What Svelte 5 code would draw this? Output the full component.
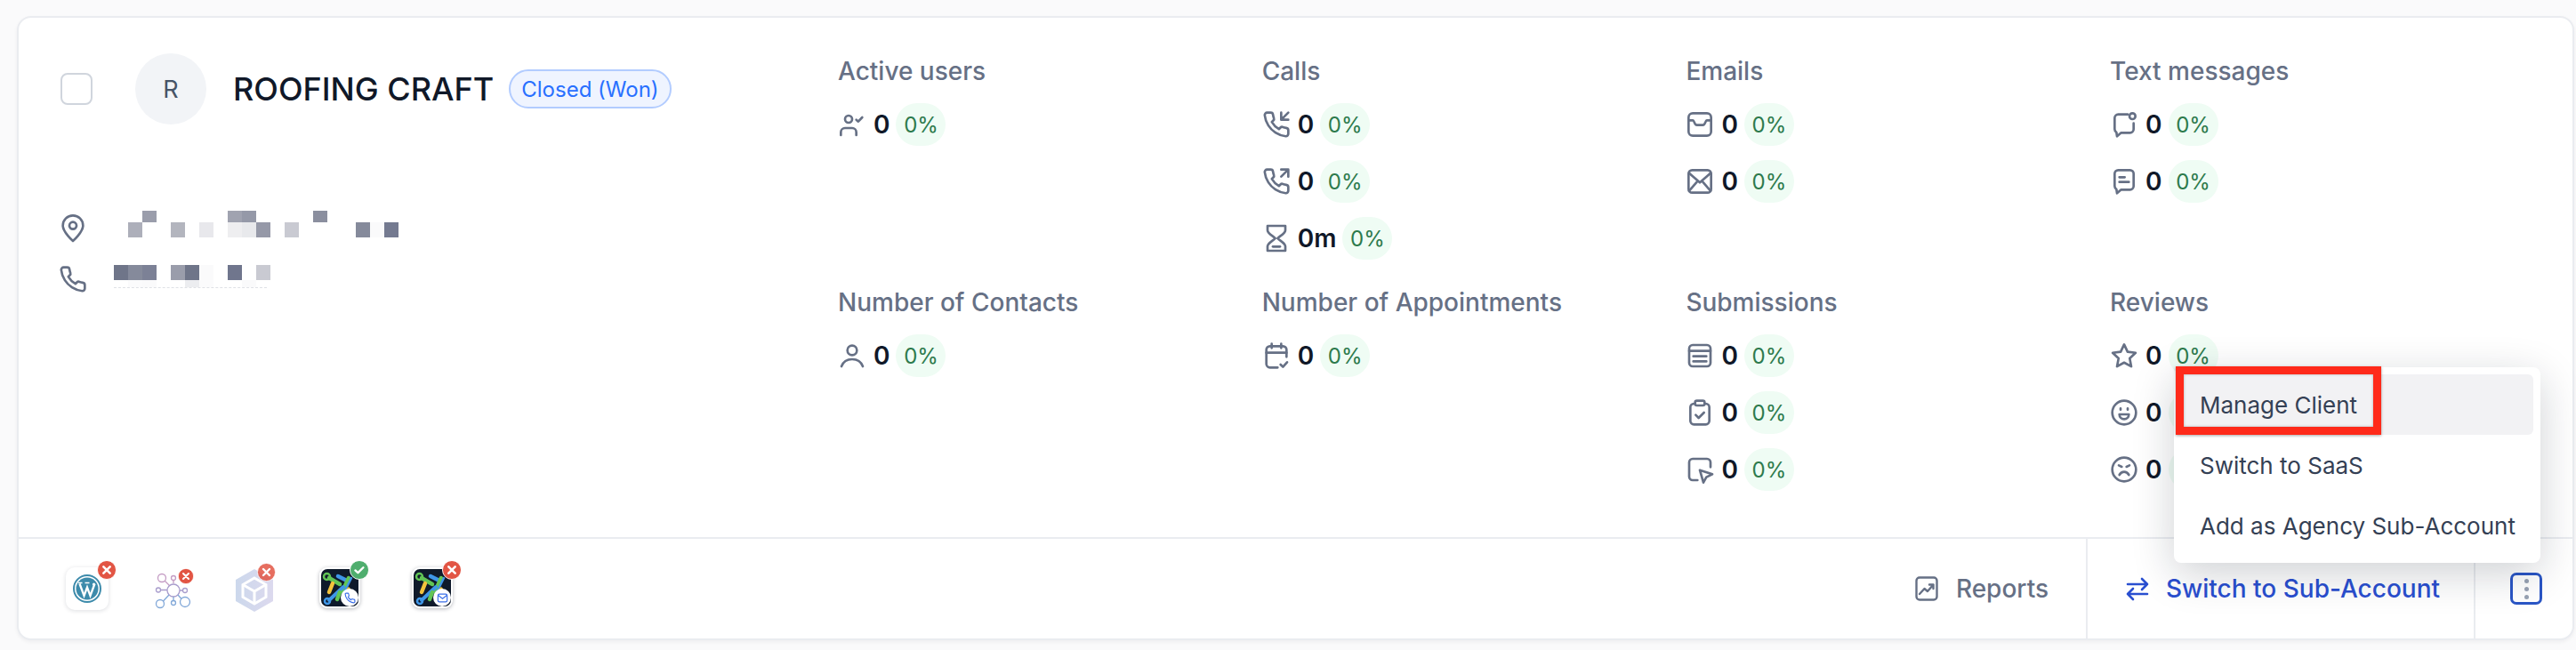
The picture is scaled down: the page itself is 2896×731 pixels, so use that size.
<script>
  const ic = {
    userCheck: `<circle cx="9" cy="7.500" r="3"/><path d="M2.500 21v-2.500A3.500 3.500 0 0 1 6 15h6a3.500 3.500 0 0 1 3.500 3.500V21"/><path d="M15.500 8l1.700 1.500 3.300-3.500"/>`,
    phoneIn: `<path d="M22 2l-6 6M16 2v6h6"/><path d="M22 16.920v3a2 2 0 0 1-2.180 2 19.790 19.790 0 0 1-8.630-3.070 19.500 19.500 0 0 1-6-6 19.790 19.790 0 0 1-3.070-8.670A2 2 0 0 1 4.110 2h3a2 2 0 0 1 2 1.720 12.840 12.840 0 0 0 .7 2.810 2 2 0 0 1-.45 2.110L8.090 9.910a16 16 0 0 0 6 6l1.270-1.270a2 2 0 0 1 2.110-.45 12.840 12.840 0 0 0 2.810.7A2 2 0 0 1 22 16.920z"/>`,
    phoneOut: `<path d="M16 8l6-6M16 2h6v6"/><path d="M22 16.920v3a2 2 0 0 1-2.180 2 19.790 19.790 0 0 1-8.630-3.070 19.500 19.500 0 0 1-6-6 19.790 19.790 0 0 1-3.070-8.670A2 2 0 0 1 4.110 2h3a2 2 0 0 1 2 1.720 12.840 12.840 0 0 0 .7 2.810 2 2 0 0 1-.45 2.110L8.090 9.910a16 16 0 0 0 6 6l1.270-1.270a2 2 0 0 1 2.110-.45 12.840 12.840 0 0 0 2.810.7A2 2 0 0 1 22 16.920z"/>`,
    hourglass: `<path d="M4.500 1.500h15v3.700c0 2.800-5 5-6.500 6.800 1.500 1.800 6.500 4 6.500 6.800v3.700h-15v-3.700c0-2.800 5-5 6.500-6.800-1.500-1.800-6.500-4-6.500-6.800z"/><path d="M9 19h6"/>`,
    inbox: `<rect x="2.500" y="2.500" width="19" height="19" rx="3.500"/><path d="M2.500 8.500h3.700c1.200 0 1 4 3.300 4h5c2.300 0 2.100-4 3.300-4h3.700"/>`,
    mail: `<rect x="2.500" y="2.500" width="19" height="19" rx="3"/><path d="M3 5l9 8 9-8M3 20l6.500-7.500M21 20l-6.500-7.500"/>`,
    msgDot: `<path d="M15 3.500H7a3 3 0 0 0-3 3V16a3 3 0 0 0 1.500 2.600L6 22l3.500-3H17a3 3 0 0 0 3-3v-5"/><circle cx="19" cy="5" r="2.500"/>`,
    msgText: `<path d="M7 2.500h10a3 3 0 0 1 3 3V16a3 3 0 0 1-3 3H9.500L6 22l-.5-3.400A3 3 0 0 1 4 16V5.500a3 3 0 0 1 3-3z"/><path d="M8 8.500h4.500M8 12.500h8"/>`,
    user: `<circle cx="12" cy="7.500" r="4"/><path d="M3 21c1.500-4 5-6 9-6s7.500 2 9 6"/>`,
    calCheck: `<path d="M20.500 13V7a3 3 0 0 0-3-3h-11a3 3 0 0 0-3 3v12a3 3 0 0 0 3 3H13"/><path d="M3.500 9.500h17M8 2v3.500M16 2v3.500"/><path d="M15.500 19.500l2 2 3.500-4"/>`,
    form: `<rect x="3" y="3" width="18" height="18" rx="3"/><path d="M3 8h18M6.500 12.500h11M6.500 16.800h11"/>`,
    clip: `<rect x="4" y="4.500" width="16" height="17.500" rx="3"/><rect x="8" y="2" width="8" height="4" rx="1.500" fill="#fff"/><path d="M8.500 14l2.500 2.500 4.500-4.500"/>`,
    cursor: `<path d="M21 10V6a3 3 0 0 0-3-3H6a3 3 0 0 0-3 3v12a3 3 0 0 0 3 3h4"/><path d="M12 12.500l10.500 3.500-5 2.500-2.500 4.500z"/>`,
    star: `<path d="M12 2.500l2.900 6.200 6.800.9-5 4.700 1.300 6.800-6-3.300-6 3.300 1.300-6.800-5-4.700 6.800-.9z"/>`,
    smile: `<circle cx="12" cy="12" r="10"/><path d="M8 13.500h8a4 4 0 0 1-8 0z"/><path d="M9 8.500v1M15 8.500v1"/>`,
    sad: `<circle cx="12" cy="12" r="10"/><path d="M7.500 8.500l2.500 1.200M16.500 8.500L14 9.700"/><path d="M8 16.500c1-1.700 2.400-2.500 4-2.500s3 .8 4 2.500"/>`,
  };
  const sections = [
    { label: 'Active users', rows: [['userCheck', '0']] },
    { label: 'Calls', rows: [['phoneIn', '0'], ['phoneOut', '0'], ['hourglass', '0m']] },
    { label: 'Emails', rows: [['inbox', '0'], ['mail', '0']] },
    { label: 'Text messages', rows: [['msgDot', '0'], ['msgText', '0']] },
    { label: 'Number of Contacts', rows: [['user', '0']] },
    { label: 'Number of Appointments', rows: [['calCheck', '0']] },
    { label: 'Submissions', rows: [['form', '0'], ['clip', '0'], ['cursor', '0']] },
    { label: 'Reviews', rows: [['star', '0'], ['smile', '0'], ['sad', '0']] },
  ];
  const addressTop = { 2: '#9a9dab', 8: '#a0a3b0', 9: '#9599a8', 14: '#8b8f9f' };
  const addressBottom = { 1: '#adafba', 4: '#b3b5be', 6: '#e8e8ec', 8: '#eeeef0', 9: '#e8e9ec', 10: '#9699a8', 12: '#c9cad2', 17: '#858a9b', 18: '#fafafb', 19: '#747a90' };
  const phoneTop = { 0: '#6f7589', 1: '#858a9b', 2: '#7c8196', 4: '#9a9dab', 5: '#6f7589', 6: '#fafafb', 8: '#70768d', 10: '#c9cad2' };
  const phoneBottom = { 1: '#fbfbfc', 2: '#fafafb', 5: '#ecedf0', 6: '#fbfbfc', 9: '#fafafb' };
  const cols = Array.from({ length: 20 }, (_, i) => i);
</script>

{#snippet cells(map, cls)}
  <div class="mosaic {cls}">
    {#each cols as c}
      <i style:background={map[c] || 'transparent'}></i>
    {/each}
  </div>
{/snippet}

{#snippet brand()}
  <svg class="brand" viewBox="0 0 46 46">
    <rect x="1" y="1" width="44" height="44" rx="8" fill="#0f1a2b" stroke="#fff" stroke-width="2"/>
    <g fill="none" stroke-linecap="round">
      <path d="M11 12L23 19" stroke="#62c556" stroke-width="4.500"/>
      <circle cx="8.500" cy="10.500" r="3.500" stroke="#62c556" stroke-width="2.500"/>
      <path d="M21 10l10 5" stroke="#3f97e8" stroke-width="4.500"/>
      <path d="M33 12L26 27" stroke="#62c556" stroke-width="4.500"/>
      <path d="M36 12L27 30" stroke="#3f97e8" stroke-width="2.500"/>
      <path d="M15 18l-4 10" stroke="#f2c23c" stroke-width="4.500"/>
      <path d="M27 22l-16 15" stroke="#3f97e8" stroke-width="4"/>
      <circle cx="9" cy="38" r="3" stroke="#3f97e8" stroke-width="2.500"/>
      <path d="M23 28l-3 8" stroke="#62c556" stroke-width="4.500"/>
      <path d="M33 24l-3 6" stroke="#f2c23c" stroke-width="3.500"/>
    </g>
  </svg>
{/snippet}

{#snippet badge(ok, cls)}
  <svg class="badge {cls}" viewBox="0 0 24 24">
    <circle cx="12" cy="12" r="11.500" fill={ok ? '#4fae6e' : '#e25544'} stroke="#fff" stroke-width="1"/>
    {#if ok}
      <path d="M7 12.500l3.300 3 6.500-6.500" fill="none" stroke="#fff" stroke-width="2.600" stroke-linecap="round" stroke-linejoin="round"/>
    {:else}
      <path d="M8 8l8 8M16 8l-8 8" fill="none" stroke="#fff" stroke-width="2.800" stroke-linecap="round"/>
    {/if}
  </svg>
{/snippet}

<div class="page">
  <div class="card">
    <div class="top">
      <div class="info">
        <div class="head">
          <span class="check"></span>
          <span class="avatar">R</span>
          <span class="name">ROOFING CRAFT</span>
          <span class="status">Closed (Won)</span>
        </div>
        <div class="contact address">
          <svg viewBox="0 0 24 24" class="ci"><path d="M12 22.500s-8.500-7.500-8.500-13a8.500 8.500 0 0 1 17 0c0 5.500-8.500 13-8.500 13z"/><circle cx="12" cy="9.500" r="3"/></svg>
          <div class="stack">
            {@render cells(addressTop, 'short')}
            {@render cells(addressBottom, 'tall')}
          </div>
        </div>
        <div class="contact phone">
          <svg viewBox="0 0 24 24" class="ci"><path d="M22 16.920v3a2 2 0 0 1-2.180 2 19.790 19.790 0 0 1-8.630-3.070 19.500 19.500 0 0 1-6-6 19.790 19.790 0 0 1-3.070-8.670A2 2 0 0 1 4.110 2h3a2 2 0 0 1 2 1.720 12.840 12.840 0 0 0 .7 2.810 2 2 0 0 1-.45 2.110L8.090 9.910a16 16 0 0 0 6 6l1.270-1.270a2 2 0 0 1 2.110-.45 12.840 12.840 0 0 0 2.810.7A2 2 0 0 1 22 16.920z"/></svg>
          <div class="stack">
            {@render cells(phoneTop, 'tall')}
            {@render cells(phoneBottom, 'thin')}
            <div class="dash"></div>
          </div>
        </div>
      </div>
      <div class="stats">
        {#each sections as s}
          <div class="section">
            <div class="label">{s.label}</div>
            {#each s.rows as r}
              <div class="row">
                <svg viewBox="0 0 24 24" class="icon">{@html ic[r[0]]}</svg>
                <span class="val">{r[1]}</span>
                <span class="pct">0%</span>
              </div>
            {/each}
          </div>
        {/each}
      </div>
    </div>

    <div class="footer">
      <div class="apps">
        <div class="app tile wp">
          <svg viewBox="0 0 32 32" class="wpl">
            <circle cx="16" cy="16" r="15" fill="none" stroke="#3d8bab" stroke-width="2"/>
            <circle cx="16" cy="16" r="12.500" fill="#3d8bab"/>
            <path d="M7.500 10.500l5 13.500 3.500-9.500 3.500 9.500 5-13.500" fill="none" stroke="#fff" stroke-width="2.300"/>
            <path d="M6 9.500h4.500M13.500 9.500h5" stroke="#fff" stroke-width="1.400"/>
            <circle cx="23.500" cy="11" r="1.600" fill="#fff"/>
          </svg>
          {@render badge(false, 'b1')}
        </div>
        <div class="app net">
          <svg viewBox="0 -3 48 48" fill="none" stroke-width="1.300">
            <g stroke="#c49cc4">
              <circle cx="11" cy="9" r="4.500"/><circle cx="24" cy="9" r="2.500"/>
              <path d="M14 12l6 6M24 11.500V15"/>
            </g>
            <g stroke="#a89ccc">
              <circle cx="24" cy="23" r="7"/><circle cx="7" cy="22.500" r="2.500"/><circle cx="37" cy="23" r="2.500"/>
              <path d="M9.500 22.500H17M31 23h3.500"/>
            </g>
            <g stroke="#82a8d8">
              <circle cx="9" cy="38" r="4.500"/><circle cx="37" cy="36" r="5.500"/><circle cx="24" cy="37" r="2.500"/>
              <path d="M12.500 35l6.500-7M24 34.500V30M29 28l4 4.500"/>
            </g>
          </svg>
          {@render badge(false, 'b2')}
        </div>
        <div class="app hex">
          <svg viewBox="0 0 46 50">
            <defs><linearGradient id="hg" x1="0" x2="1"><stop offset="0" stop-color="#ccd8ec"/><stop offset="1" stop-color="#dcd9ee"/></linearGradient></defs>
            <path d="M23 1l21 12v24L23 49 2 37V13z" fill="url(#hg)"/>
            <path d="M23 11l13 7.500v14L23 40 10 32.500v-14z" fill="none" stroke="#fff" stroke-width="3"/>
            <path d="M10 18.500L23 26l13-7.500M23 26v14" fill="none" stroke="#fff" stroke-width="3"/>
          </svg>
          {@render badge(false, 'b3')}
        </div>
        <div class="app tile4">
          {@render brand()}
          <span class="mini"><svg viewBox="0 0 24 24"><path d="M22 16.920v3a2 2 0 0 1-2.180 2 19.790 19.790 0 0 1-8.630-3.070 19.500 19.500 0 0 1-6-6 19.790 19.790 0 0 1-3.070-8.670A2 2 0 0 1 4.110 2h3a2 2 0 0 1 2 1.720 12.840 12.840 0 0 0 .7 2.810 2 2 0 0 1-.45 2.110L8.090 9.910a16 16 0 0 0 6 6l1.270-1.270a2 2 0 0 1 2.110-.45 12.840 12.840 0 0 0 2.810.7A2 2 0 0 1 22 16.920z"/></svg></span>
          {@render badge(true, 'b1')}
        </div>
        <div class="app tile5">
          {@render brand()}
          <span class="mini"><svg viewBox="0 0 24 24"><rect x="2.500" y="4" width="19" height="16" rx="3"/><path d="M3 6.500l9 7 9-7"/></svg></span>
          {@render badge(false, 'b1')}
        </div>
      </div>
      <div class="reports">
        <svg viewBox="0 0 26 28" class="ri"><rect x="1.500" y="1.500" width="23" height="25" rx="3.500"/><path d="M5 20l5.500-6 3.500 3 6.500-7.500M16 9.500h4.500V14"/></svg>
        <span>Reports</span>
      </div>
      <div class="switch">
        <svg viewBox="0 0 26 28" class="si"><path d="M2 9h22M18 3l6 6-6 6M24 20H2M8 14l-6 6 6 6"/></svg>
        <span>Switch to Sub-Account</span>
      </div>
      <div class="more">
        <span class="kebab"><i></i><i></i><i></i></span>
      </div>
    </div>

    <div class="menu">
      <div class="item active">Manage Client</div>
      <div class="item">Switch to SaaS</div>
      <div class="item">Add as Agency Sub-Account</div>
      <div class="mark"></div>
    </div>
  </div>
</div>

<style>
  :global(body) { margin: 0; background: #fafafb; }
  .page {
    height: 731px;
    box-sizing: border-box;
    padding: 18px 2px 0 19px;
    overflow: hidden;
    font-family: Inter, "Liberation Sans", sans-serif;
  }
  .card {
    position: relative;
    height: 702px;
    box-sizing: border-box;
    background: #fff;
    border: 2px solid #eaecf0;
    border-radius: 16px;
    box-shadow: 0 2px 4px rgba(16, 24, 40, 0.05);
    display: flex;
    flex-direction: column;
  }
  .top { display: flex; height: 584px; box-sizing: border-box; padding: 40px 0 0 47px; }
  .info { width: 874px; flex: none; }
  .head { display: flex; align-items: center; height: 80px; }
  .check {
    width: 36px; height: 36px; box-sizing: border-box;
    border: 2px solid #d0d5dd; border-radius: 8px; margin-right: 48px;
  }
  .avatar {
    width: 80px; height: 80px; border-radius: 50%; background: #f2f4f7;
    display: flex; align-items: center; justify-content: center;
    color: #475467; font-size: 27px; margin-right: 30px;
  }
  .name { font-size: 36px; font-weight: 500; color: #101828; margin-right: 17px; }
  .status {
    height: 44px; box-sizing: border-box; padding: 0 12px;
    display: flex; align-items: center;
    border: 2px solid #b2ccff; border-radius: 22px; background: #eff4ff;
    color: #2970ff; font-size: 24px; font-weight: 400; white-space: nowrap;
  }
  .contact { display: flex; align-items: flex-start; }
  .address { margin-top: 97px; height: 61px; }
  .phone { height: 40px; }
  .ci {
    width: 32px; height: 32px; flex: none; margin-left: -2px; margin-right: 30px;
    fill: none; stroke: #667085; stroke-width: 2; stroke-linejoin: round;
  }
  .address .ci { margin-top: 4px; }
  .stack { display: flex; flex-direction: column; }
  .mosaic { display: grid; grid-template-columns: repeat(20, 16px); }
  .mosaic i { display: block; }
  .short i { height: 13px; }
  .tall i { height: 16.500px; }
  .thin i { height: 8px; }
  .dash { width: 172px; border-top: 1px dashed #dfe1e6; }
  .stats {
    display: grid; grid-template-columns: repeat(4, 476.700px);
    grid-template-rows: 260px auto; align-content: start;
  }
  .label { font-size: 28px; font-weight: 500; line-height: 40px; color: #667085; margin-bottom: 16px; white-space: nowrap; }
  .row { display: flex; align-items: center; height: 48px; margin-bottom: 16px; }
  .icon {
    width: 32px; height: 32px; flex: none; margin-right: 8px;
    fill: none; stroke: #667085; stroke-width: 2; stroke-linecap: round; stroke-linejoin: round;
  }
  .val { font-size: 28px; font-weight: 600; color: #101828; margin-right: 7px; }
  .pct {
    width: 56px; height: 48px; border-radius: 24px; background: #effcf4;
    display: flex; align-items: center; justify-content: center;
    color: #2d7a4c; font-size: 24px;
  }
  .footer {
    flex: 1; display: flex; align-items: stretch;
    border-top: 2px solid #eaecf0;
  }
  .apps { display: flex; align-items: center; padding-left: 53px; margin-right: auto; }
  .app { position: relative; flex: none; width: 48px; height: 48px; margin-right: 48px; }
  .app svg { display: block; }
  .tile { background: #fff; border-radius: 10px; box-shadow: 0 1px 5px rgba(16, 24, 40, 0.14); }
  .wpl { position: absolute; left: 8px; top: 8px; width: 32px; height: 32px; }
  .net { margin-right: 44px; }
  .wp { margin-right: 49px; }
  .net svg:first-child { width: 48px; height: 48px; }
  .hex svg:first-child { width: 46px; height: 50px; margin-top: 1px; }
  .tile4 { margin-right: 56px; }
  .brand { width: 46px; height: 46px; box-shadow: 0 1px 4px rgba(16, 24, 40, 0.3); border-radius: 9px; }
  .mini {
    position: absolute; left: 24px; top: 24px; width: 20px; height: 20px; border-radius: 50%;
    background: #fff; display: flex; align-items: center; justify-content: center;
  }
  .mini svg { width: 13px; height: 13px; fill: none; stroke: #3b6fe8; stroke-width: 2.200; stroke-linejoin: round; }
  .badge { position: absolute; }
  .b1 { width: 22px; height: 22px; right: -9px; top: -8.500px; }
  .tile4 .b1, .tile5 .b1 { right: -8px; }
  .b2 { width: 18px; height: 18px; right: 1px; top: 1px; }
  .b3 { width: 21px; height: 21px; right: 1px; top: -5px; opacity: 0.85; }
  .reports { display: flex; align-items: center; padding-right: 42px; color: #667085; font-size: 28px; font-weight: 500; }
  .ri { width: 26px; height: 28px; margin-right: 20px; fill: none; stroke: #667085; stroke-width: 2.400; stroke-linejoin: round; stroke-linecap: round; }
  .switch {
    width: 438px; box-sizing: border-box; padding-left: 43px;
    display: flex; align-items: center;
    border-left: 2px solid #eaecf0; border-right: 2px solid #eaecf0;
    color: #2a4fd0; font-size: 28px; font-weight: 500;
  }
  .si { width: 26px; height: 28px; margin-right: 19px; fill: none; stroke: #2a4fd0; stroke-width: 2.600; stroke-linecap: round; stroke-linejoin: round; }
  .more { width: 109px; box-sizing: border-box; display: flex; align-items: center; padding-left: 39px; }
  .kebab {
    width: 36px; height: 36px; box-sizing: border-box;
    border: 3.500px solid #2a56c6; border-radius: 7px;
    display: flex; flex-direction: column; align-items: center; justify-content: center; gap: 4px;
  }
  .kebab i { width: 5px; height: 5px; border-radius: 50%; background: #98a2b3; }
  .menu {
    position: absolute; left: 2423px; top: 393px; width: 412px; height: 220px;
    box-sizing: border-box; padding: 8px;
    background: #fff; border-radius: 8px;
    box-shadow: 0 12px 48px rgba(16, 24, 40, 0.2);
  }
  .item {
    height: 68px; display: flex; align-items: center; padding-left: 21px;
    font-size: 26px; color: #344054; border-radius: 6px; white-space: nowrap;
  }
  .active { background: #f2f2f4; }
  .mark {
    position: absolute; left: 2px; top: -1px; width: 231px; height: 77px; box-sizing: border-box;
    border: 9px solid #ff2a1a; box-shadow: 0 1px 3px rgba(0, 0, 0, 0.35), inset 0 0 3px rgba(0, 0, 0, 0.3);
  }
</style>
